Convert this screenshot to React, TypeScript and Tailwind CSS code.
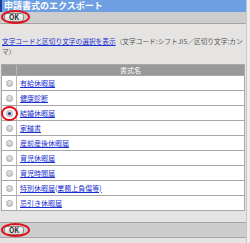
import React from "react";

const FONT = { fontFamily: '"Noto Sans CJK JP", "Liberation Sans", sans-serif' };

const forms = [
  "有給休暇届",
  "健康診断",
  "結婚休暇届",
  "家譜書",
  "産前産後休暇届",
  "育児休暇届",
  "育児時間届",
  "特別休暇届(業務上負傷等)",
  "忌引き休暇届",
];

// red marker drawn over the OK buttons / selected radio
function Ring({ className }: { className: string }) {
  return (
    <span
      className={`pointer-events-none absolute rounded-[50%] border-2 border-[#e0101a] ${className}`}
    />
  );
}

function OkButton() {
  return (
    <div className="relative ml-[4px] flex items-center">
      <button className="flex h-[9px] w-[20px] items-center justify-center rounded-[3px] border border-[#8a8a8a] bg-gradient-to-b from-[#fafafa] to-[#d8d8d8] text-[7px] font-bold leading-none text-[#333]">
        OK
      </button>
      <Ring className="-left-[3px] -top-[3px] h-[14px] w-[29px]" />
    </div>
  );
}

function Radio({ checked }: { checked?: boolean }) {
  return (
    <span className="flex h-[7px] w-[7px] items-center justify-center rounded-full border border-[#a8a8a8] bg-gradient-to-b from-[#e8e8e8] to-[#c8c8c8]">
      {checked && <span className="h-[3px] w-[3px] rounded-full bg-[#1d3f8a]" />}
    </span>
  );
}

export default function App() {
  return (
    <div className="flex h-[243px] w-[250px] overflow-hidden bg-[#e6e4e2]" style={FONT}>
      <div className="flex w-[246px] flex-col">
        {/* Title */}
        <div className="h-[12px] border-l-2 border-[#1f3c98] bg-[#6f9fe3] pl-[2px] text-[9px] font-bold leading-[12px] text-white">
          申請書式のエクスポート
        </div>

        {/* Top toolbar */}
        <div className="flex h-[12px] items-center border-b border-[#a4a4a4] bg-[#cdcdcd]">
          <OkButton />
        </div>

        {/* Encoding info */}
        <div className="mt-[12px] px-[2px] text-[6.7px] leading-[10px] text-[#555]">
          <a className="text-[#1a2fd0] underline" href="#">
            文字コードと区切り文字の選択を表示
          </a>
          <span>（文字コード:シフトJIS／区切り文字:カンマ）</span>
        </div>

        {/* Form list */}
        <div className="mx-[1px] mt-[8px] border border-[#a8a8a8] bg-white">
          <div className="flex h-[10px] bg-[#999999] text-[7px] leading-[10px] text-white">
            <div className="w-[15px] border-r border-[#b8b8b8]" />
            <div className="flex-1 text-center">書式名</div>
          </div>
          {forms.map((name, i) => (
            <div key={name} className="flex h-[15px] border-t border-[#a8a8a8]">
              <div className="relative flex w-[15px] items-center justify-center border-r border-[#b8b8b8]">
                <Radio checked={i === 2} />
                {i === 2 && <Ring className="-left-[1px] top-[0px] h-[15px] w-[17px]" />}
              </div>
              <div className="flex flex-1 items-center pl-[3px] text-[7px] leading-none">
                <a className="text-[#1a2fd0] underline" href="#">
                  {name}
                </a>
              </div>
            </div>
          ))}
        </div>

        {/* Bottom toolbar */}
        <div className="mt-[11px] flex h-[16px] items-center border-y border-[#a4a4a4] bg-[#cdcdcd]">
          <OkButton />
        </div>
      </div>
      <div className="w-[4px] border-l border-[#c8c8c8] bg-[#ededed]" />
    </div>
  );
}
